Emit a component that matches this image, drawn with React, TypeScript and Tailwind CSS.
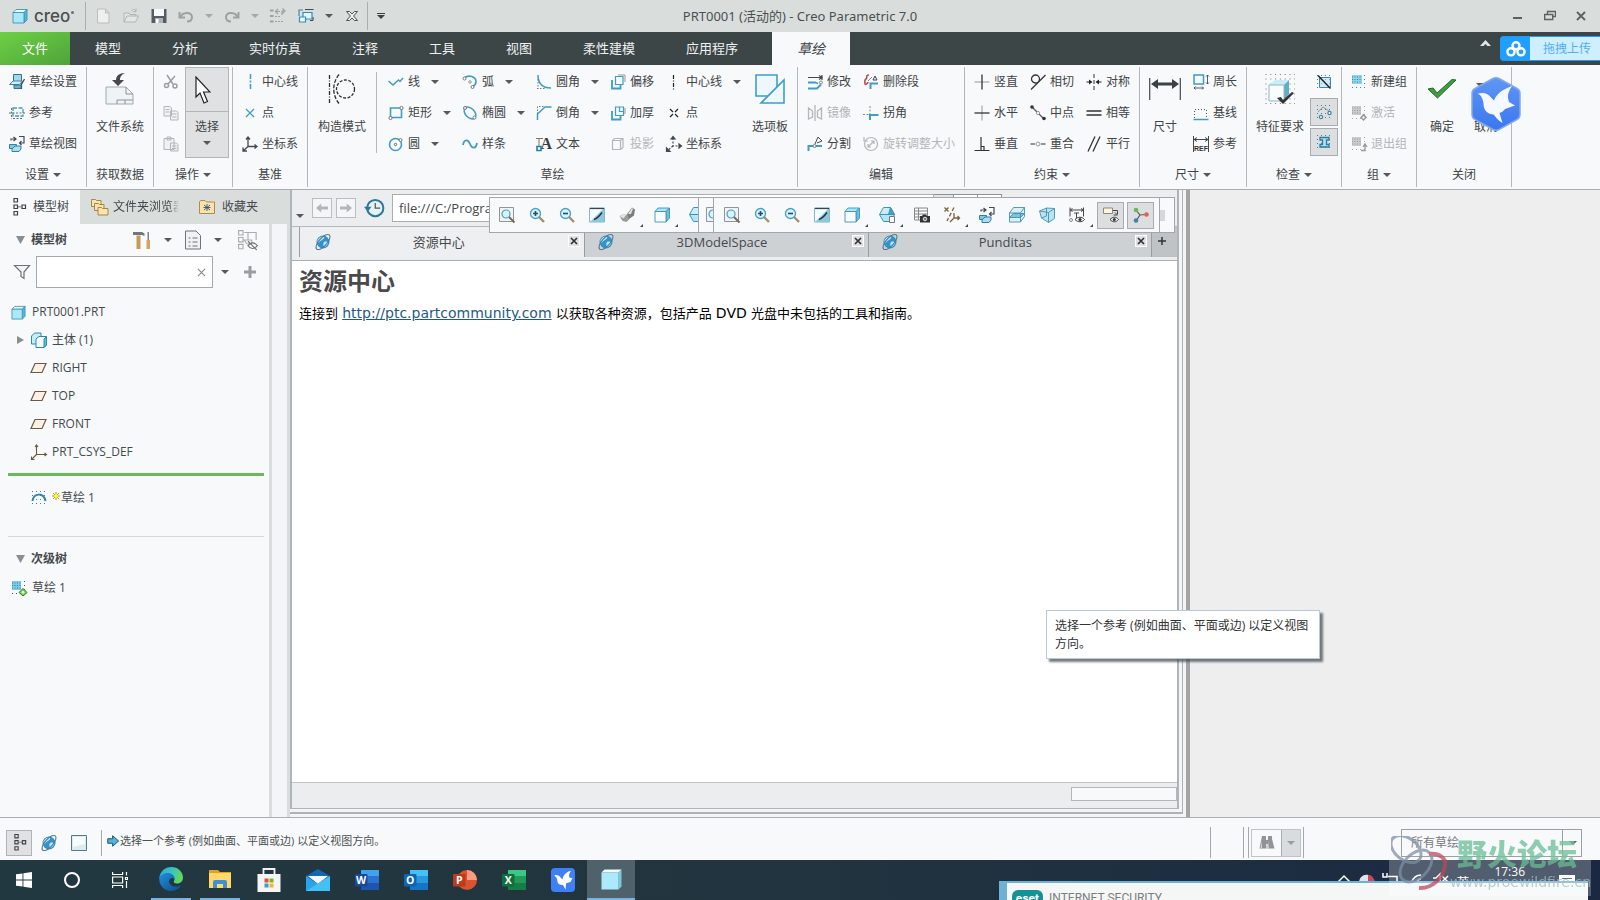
import React from "react";

const B = "#3f9cc6";
const D = "#44494c";
const G = "#b3b7b9";

function Globe() {
  return (
    <g>
      <circle cx="8" cy="8" r="6.500" fill="#2f93cc" />
      <path d="M3.500 5c2-2.500 4.500-3 5.500-2s-1 2-2 3-3 1-3 3c-2-1-2-3 -0.500-4zM9 8c2-1 4 0 4 1s-2 4-4 4c-1-2-1-4 0-5z" fill="#bfe6f7" />
      <ellipse cx="8" cy="8" rx="9.500" ry="4" transform="rotate(-48 8 8)" fill="none" stroke="#54778d" strokeWidth="1.100" />
    </g>
  );
}

function Cube() {
  return (
    <g stroke="#3d93b8" strokeWidth="0.900">
      <path d="M1 4.500L4 1.500h11L12 4.500z" fill="#e9fbff" />
      <path d="M12 4.500l3-3V12L12 15z" fill="#5cb6d6" />
      <path d="M1 4.500h11V15H1z" fill="#a9e9fa" />
    </g>
  );
}

function Dots({ color = "#4a7f9c" }: { color?: string }) {
  return <path d="M1 1.500h15M1 5.500h15M1 9.500h15M1 13.500h15" stroke={color} strokeDasharray="1 3" strokeWidth="1" fill="none" />;
}

function Magnifier({ children }: { children?: React.ReactNode }) {
  return (
    <g fill="none">
      <path d="M10 10l5 5" stroke="#b08b65" strokeWidth="2.400" />
      <circle cx="6.500" cy="6.500" r="5" fill="#d9f2fb" stroke="#4ba0c8" strokeWidth="1.300" />
      {children}
    </g>
  );
}

const art: Record<string, React.ReactNode> = {
  cube: <Cube />,
  globe: <Globe />,
  newFile: <path d="M2.500 1h8l3.500 3.500V15h-11.500zM10.500 1v4h3.500" fill="#eef0f0" stroke="#b9bdbe" />,
  open: <path d="M1 14V5h5l1 1.500h6V8M1 14l3-6h11.500l-3 6zM8 3c2-2 4-2 5 0M13 0.500v3h-3" fill="#e3e6e6" stroke="#b0b4b5" />,
  save: (
    <g>
      <path d="M0.500 1h15v14h-15z" fill="#555c63" />
      <path d="M3 1h10v7H3z" fill="#f6f8fa" />
      <path d="M4 10h8v5H4z" fill="#a9b2b9" />
      <path d="M5 11h2.500v4H5z" fill="#fff" />
    </g>
  ),
  undo: <path d="M1.500 4v5.500H7M2.500 9C4 4.500 14 3 14 9c0 3-2 4.500-5 4.500" fill="none" stroke="#9da2a4" strokeWidth="2" />,
  redo: <path d="M14.500 4v5.500H9M13.500 9C12 4.500 2 3 2 9c0 3 2 4.500 5 4.500" fill="none" stroke="#9da2a4" strokeWidth="2" />,
  regen: (
    <g fill="none" stroke="#9da2a4" strokeWidth="1.200">
      <path d="M0.500 2h2.500v1H0.500zM0.500 7.500h2.500v1H0.500zM0.500 13h2.500v1H0.500z" />
      <path d="M5 8.500h5M5 13.500h9" strokeDasharray="2 1" />
      <path d="M8 1L5.500 3.500 8 6M5.500 3.500H10M12.500 0.500L15 3l-2.500 2.500M15 3h-3v4" />
    </g>
  ),
  windows: (
    <g strokeWidth="1.200">
      <path d="M1 8V2h4M1 2h3" stroke="#3c8bb0" fill="none" />
      <path d="M7 1.500h8.500M12 12.500h3M15 9v3.500" stroke={D} fill="none" />
      <path d="M5 4.500h9v6.500H5z" fill="#e6f3f8" stroke="#2e8fb9" />
      <path d="M1.500 9h6v5h-6z" fill="#eefaff" stroke="#2e8fb9" />
    </g>
  ),
  closeX: <path d="M2.500 3.500h3L8 6l2.500-2.500h3L9.600 8l3.900 4.500h-3L8 10l-2.500 2.500h-3L6.400 8z" fill="#eef0f0" stroke="#4a4f50" />,
  sketchSetup: (
    <g fill="none">
      <path d="M4.500 0.500h8v9h-8z" fill="#9fd9ee" stroke="#39708d" />
      <path d="M0.500 10.500l3.500-3.500h9.500l-3 3.500z" stroke="#3f83a5" fill="#d4effa" />
      <path d="M5 14.500h7.500v-4l3-5.500" stroke={D} strokeWidth="1.200" />
      <path d="M5 11h7v3.500H5z" fill="#5fb4d3" stroke="#39708d" />
    </g>
  ),
  reference: (
    <g fill="none">
      <path d="M4 3h10v8H4z" stroke="#3f9cc6" strokeDasharray="4 1.500" strokeWidth="1.300" />
      <path d="M0 8h16M4 13.500h10M2.500 3v11" stroke={D} strokeDasharray="2 1.500" strokeWidth="0.800" />
    </g>
  ),
  sketchView: (
    <g fill="none">
      <path d="M2 4.500V3h4M4.500 1L7 3 4.500 5M10 0.500h5v6.500h-4M12.500 5l-2 2 2 2" stroke={D} strokeWidth="1.200" />
      <path d="M0.500 8.500h7v4h-7z" fill="#7fc9e2" stroke="#357f9f" />
      <path d="M3 13l3-3h6v3l-2 2.500H3z" fill="#a8def0" stroke="#357f9f" />
    </g>
  ),
  cut: (
    <g fill="none" stroke="#9a9ea0" strokeWidth="1.500">
      <path d="M4 1l6 9M12 2L5 10" />
      <circle cx="3.500" cy="11.500" r="2" />
      <circle cx="12" cy="12" r="2" />
    </g>
  ),
  copy: <path d="M1 1.500h6l1.500 1.500v8H1zM2.500 4.500h4M2.500 7h4M7.500 6h6l1.500 1.500V15H7.500zM9 9h4.500M9 12h4.500" fill="#f2f3f4" stroke={G} />,
  paste: <path d="M1 2.500h10v11H1zM4 1h4v3H4zM7.500 7h6l1.500 1.500V15H7.500zM9 10h4.500M9 12.500h4.500" fill="#eff0f1" stroke={G} />,
  centerBlue: <path d="M8.500 0v16" stroke={B} strokeWidth="1.500" strokeDasharray="5 1.500 2 1.500" />,
  pointBlue: <path d="M4 4l8 8M12 4l-8 8" stroke={B} strokeWidth="1.200" />,
  csys: <path d="M6 1v9.500h9M6 10.500L1 15M4 3.500L6 1l2 2.500M12.500 8.500l2.500 2-2.500 2M1 11.500V15h4" fill="none" stroke={D} strokeWidth="1.300" />,
  line: <path d="M0.500 7l4.500 4 5.500-5L12 7.500 15 4" fill="none" stroke={B} strokeWidth="1.500" />,
  rect: (
    <g fill="#fff">
      <path d="M2.500 3h11v9.500h-11z" fill="none" stroke={B} strokeWidth="1.600" />
      <circle cx="2.500" cy="13" r="1.600" stroke="#777" />
      <circle cx="13.500" cy="3" r="1.600" stroke="#777" />
    </g>
  ),
  circle: (
    <g fill="none">
      <circle cx="7.500" cy="8.500" r="6" stroke={B} strokeWidth="1.600" />
      <circle cx="7.500" cy="8.500" r="1.200" stroke="#666" />
      <circle cx="12.500" cy="4" r="1.500" stroke="#777" fill="#fff" />
    </g>
  ),
  arc: (
    <g fill="#fff">
      <path d="M2 4c5-4 12-1 12 3.500 0 2-1.500 4-3 5" fill="none" stroke={B} strokeWidth="1.600" />
      <circle cx="2.500" cy="4.500" r="1.500" stroke="#777" />
      <circle cx="8" cy="8" r="1.300" stroke="#999" />
      <circle cx="10.500" cy="13" r="1.500" stroke="#777" />
    </g>
  ),
  ellipse: (
    <g fill="#fff">
      <ellipse cx="8" cy="8" rx="7" ry="4.500" transform="rotate(45 8 8)" fill="none" stroke={B} strokeWidth="1.500" />
      <circle cx="3" cy="3" r="1.500" stroke="#777" />
      <circle cx="12.500" cy="12.500" r="1.500" stroke="#777" />
    </g>
  ),
  spline: <path d="M1 9c1-6 5-6 7-1s6 5 7-1" fill="none" stroke={B} strokeWidth="1.800" />,
  fillet: (
    <g fill="none">
      <path d="M2 1c0 8 4 13 13 13" stroke={B} strokeWidth="1.500" />
      <path d="M2 5v9.500M1 14.500h9" stroke="#777" strokeDasharray="1.500 1.500" />
    </g>
  ),
  chamfer: (
    <g fill="none">
      <path d="M1.500 15v-6L9 2h6.500" stroke={B} strokeWidth="1.500" />
      <path d="M1.500 9V1.500H9" stroke="#777" strokeDasharray="1.500 1.500" />
    </g>
  ),
  offset: (
    <g fill="none">
      <path d="M2 6v8.500h8.500V10" stroke={B} strokeWidth="1.800" />
      <path d="M5.500 2.500h7.500v8h-7.500z" stroke={B} strokeWidth="1.200" />
      <path d="M8 1h7v7" stroke="#999" />
    </g>
  ),
  thicken: (
    <g fill="none">
      <path d="M2 6v8.500h8.500V10" stroke={B} strokeWidth="1.800" />
      <path d="M5.500 2h8v8.500h-8zM9.500 2v4.500h4" stroke={B} strokeWidth="1.200" />
      <path d="M15 3v6" stroke="#999" />
    </g>
  ),
  project: <path d="M2.500 4.500h8v9h-8zM2.500 4.500l2-2h8.500v9l-2.500 2M10.500 4.500l2.500-2" fill="none" stroke={G} strokeWidth="1.200" />,
  centerBlack: <path d="M7.500 1v15" stroke="#222" strokeWidth="1.200" strokeDasharray="4 1.500 1 1.500" />,
  pointBlack: <path d="M4 4l3 3M12 4L9 7M4 12l3-3M12 12L9 9" stroke="#222" strokeWidth="1.200" />,
  csysDash: (
    <g fill="none" stroke={D} strokeWidth="1.200">
      <path d="M7 2v8h8M7 10l-6 5" strokeDasharray="2 1.500" />
      <path d="M5 3l2-2.500L9 3zM13 8l2.500 2-2.500 2zM0.500 12v3.500H4z" fill={D} />
    </g>
  ),
  modify: (
    <g fill="none">
      <path d="M1 3.500h14M12 1.500l3 2-3 2M15 1v5" stroke={D} strokeWidth="1.200" />
      <path d="M1 8.500h7l3 1M1 14.500h9l4-4" stroke={B} strokeWidth="1.800" />
      <circle cx="14" cy="8.500" r="1.500" stroke="#888" />
    </g>
  ),
  deleteSeg: (
    <g fill="none">
      <path d="M6 1c-4 0-1 3-3 4s-1 4-1 5 3 0 3-2" stroke="#b5494b" strokeWidth="1.500" />
      <path d="M7.500 15v-5.500h7.500" stroke={B} strokeWidth="2" />
      <path d="M10 6l2-4 2 4z" stroke={D} />
      <path d="M5 7l4-4" stroke="#888" />
    </g>
  ),
  mirror: <path d="M8 0v16M1.500 3l4 3v6l-4 2zM14.500 3l-4 3v6l4 2z" fill="none" stroke={G} strokeWidth="1.300" />,
  corner: (
    <g fill="none">
      <path d="M7 15v-5h8.500" stroke={B} strokeWidth="2" />
      <path d="M7 1v8M0 9.500h6" stroke="#888" strokeDasharray="2 1.500" />
    </g>
  ),
  divide: (
    <g fill="none">
      <path d="M1.500 15v-5H6M9 10h6" stroke={B} strokeWidth="2" />
      <circle cx="7.500" cy="10" r="1.500" stroke="#777" />
      <path d="M8 8l3-7 4 4-5 2" stroke={D} />
    </g>
  ),
  rotate: (
    <g fill="none" stroke={G} strokeWidth="1.200">
      <circle cx="8" cy="8" r="6.500" />
      <path d="M5 11l6-6M5 8v3h3M8 5h3v3M1 1v4h4" />
    </g>
  ),
  vertical: (
    <g>
      <path d="M0.500 8h15" stroke="#a9adaf" strokeWidth="1.300" />
      <path d="M8 0.500v15" stroke="#333" strokeWidth="1.300" />
    </g>
  ),
  horizontal: (
    <g>
      <path d="M8 0.500v15" stroke="#a9adaf" strokeWidth="1.300" />
      <path d="M0.500 8h15" stroke="#333" strokeWidth="1.300" />
    </g>
  ),
  perpendicular: <path d="M7 1v13M0.500 14.500h15M10 14.500v-4H7" fill="none" stroke="#333" strokeWidth="1.200" />,
  tangent: (
    <g fill="none" stroke="#333" strokeWidth="1.300">
      <circle cx="5.500" cy="5" r="4" />
      <path d="M1 15.500L15.500 1" />
    </g>
  ),
  midpoint: (
    <g>
      <path d="M2 2l12 12" stroke="#555" strokeWidth="1.200" />
      <circle cx="2" cy="2" r="1.800" fill="#333" />
      <circle cx="14" cy="13.500" r="1.800" fill="#333" />
      <circle cx="8" cy="8" r="1.600" fill="#fff" stroke="#999" />
    </g>
  ),
  coincident: (
    <g fill="none">
      <path d="M0.500 8h4.500M11 8h4.500" stroke="#333" strokeWidth="1.200" />
      <circle cx="8" cy="8" r="2" stroke="#999" />
    </g>
  ),
  symmetric: (
    <g>
      <path d="M8 0v16" stroke="#333" strokeDasharray="4 2" />
      <path d="M0.500 8H4M12 8h3.500" stroke="#222" strokeWidth="1.200" />
      <path d="M3 5.500l3.500 2.500-3.500 2.500zM13 5.500L9.500 8l3.500 2.500z" fill="#222" />
    </g>
  ),
  equal: <path d="M0.500 6h15M0.500 10h15" stroke="#333" strokeWidth="1.300" />,
  parallel: <path d="M2 15.500L9 0.500M7 15.500L14 0.500" stroke="#333" strokeWidth="1.300" />,
  perimeter: (
    <g fill="none">
      <path d="M1 1h9.500v9H1z" stroke={B} strokeWidth="1.500" />
      <path d="M14.500 1v9M13 2.500L14.500 1 16 2.500M13 8.500l1.500 1.500L16 8.500M1 14h9.500M2.500 12.500L1 14l1.500 1.500M9 12.500l1.500 1.500L9 15.500" stroke={D} strokeWidth="0.900" />
    </g>
  ),
  baseline: (
    <g fill="none">
      <path d="M1.500 13V4.500h12V13" stroke="#555" strokeDasharray="1 2" />
      <path d="M0.500 14.500h15" stroke={B} strokeWidth="1.500" />
    </g>
  ),
  refDim: (
    <g fill="none" stroke={D}>
      <path d="M0.500 0v16M15.500 0v16M1 3.500h14M4 1.500l-3 2 3 2M12 1.500l3 2-3 2" />
      <text x="8" y="14.500" fontSize="7" textAnchor="middle" stroke="none" fill="#333" fontFamily="Liberation Sans, sans-serif" fontWeight="700">REF</text>
    </g>
  ),
  overlap: (
    <g>
      <Dots />
      <path d="M3.500 3.500v10h10zM3.500 3.500h11v10" fill="#a9dcec" fillOpacity="0.500" stroke="#3a89a8" />
      <path d="M2 1.500l12.500 13" stroke="#223" strokeWidth="1.500" />
    </g>
  ),
  openEnds: (
    <g>
      <Dots />
      <path d="M2 8l5-5 6 4" fill="none" stroke="#8a9aa5" />
      <circle cx="5" cy="13" r="1.600" fill="#fff" stroke="#3a89a8" strokeWidth="1.300" />
      <circle cx="13.500" cy="9" r="1.600" fill="#fff" stroke="#3a89a8" strokeWidth="1.300" />
    </g>
  ),
  shadeLoops: (
    <g>
      <Dots />
      <path d="M4 3.500h9v2.500h-2.500v4.500H13V13H4v-2.500h2.500V6H4z" fill="#b3e0f0" stroke="#2c7d9e" strokeWidth="1.300" />
    </g>
  ),
  newGroup: (
    <g>
      <Dots />
      <path d="M1 1h10v9H1z" fill="#8fd4ea" />
      <path d="M1 3h10M1 5.500h10M1 8h10" stroke="#2f7fa0" strokeDasharray="1 1.500" />
    </g>
  ),
  activate: (
    <g>
      <Dots color="#aaa" />
      <path d="M1 1h9v9H1z" fill="#c9cccd" />
      <path d="M1 3h9M1 5.500h9M1 8h9" stroke="#999" strokeDasharray="1 1.500" />
      <path d="M12.500 8.500l3.500 4-3.500 3.500L9 12.500z" fill="#999" />
      <circle cx="12.500" cy="12.500" r="1.200" fill="#eee" />
    </g>
  ),
  exitGroup: (
    <g>
      <Dots color="#aaa" />
      <path d="M1 1h9v9H1z" fill="#c9cccd" />
      <path d="M1 3h9M1 5.500h9M1 8h9" stroke="#999" strokeDasharray="1 1.500" />
      <path d="M10 14.500h4V9M12 11l2-3 2 3" stroke="#999" fill="none" strokeWidth="1.300" />
    </g>
  ),
  tree: (
    <g fill="none" stroke="#3f4446" strokeWidth="1.200">
      <path d="M2 -0.500h3.500v3.500H2zM2 6h3.500v3.500H2zM2 12.500h3.500v3.500H2zM10 6h3.500v3.500H10z" />
      <path d="M6 7.800h3.500" stroke="#888" />
    </g>
  ),
  folders: (
    <g fill="#fbe3ae" stroke="#a07a3c" strokeWidth="0.900">
      <path d="M0.500 1.500V0.500h4l1 1h4.500v6H0.500z" />
      <path d="M3.500 4.500h4l1 1h4.500v6H3.500z" />
      <path d="M7 8.500h3.500l1 1H17V16H7z" />
    </g>
  ),
  favorite: (
    <g>
      <path d="M0.500 3V14.500h15V3H7.500L6 1.500H1.500z" fill="#fbe3ae" stroke="#b08b50" />
      <path d="M8 5v7M5 6l6 5M11 6l-6 5M4.500 8.500h7" stroke="#31566b" strokeWidth="0.900" />
    </g>
  ),
  tools: (
    <g>
      <path d="M-1 0h9l2.500 1.500V4L8 3H-1z" fill="#6f777c" />
      <path d="M2.500 3.500h4V17h-4z" fill="#c79a55" />
      <path d="M13.500 0h1.500v8h-1.500z" fill="#7b8387" />
      <path d="M12.500 8H16v9h-3.500z" fill="#d2a560" />
    </g>
  ),
  list: (
    <g fill="none">
      <path d="M0.500 -1h10.500L15.500 3.500V17H0.500z" fill="#f1f2f3" stroke="#6d7376" />
      <path d="M3.500 6h2M3.500 10h2M3.500 14h2M7.500 6h5M7.500 10h5M7.500 14h5" stroke="#6d7376" />
    </g>
  ),
  treeHidden: (
    <g fill="none" stroke="#a9adaf" strokeWidth="0.900">
      <path d="M0.500 0.500h3.500v3.500h-3.500zM0.500 6h3.500v3.500h-3.500zM0.500 11.500h3.500v3.500h-3.500zM5 2h10M8 2v6M14.500 2v6M5 8h6v3H7z" />
      <path d="M8 12.500c2-3 5-3 7.500 0-2.500 3-5.500 3-7.500 0zM8 9l7 7" stroke="#777" />
    </g>
  ),
  filter: <path d="M0.500 1.500h15L10 8v6.500l-3-2V8z" fill="#f2f3f4" stroke="#6d7376" strokeWidth="1.200" />,
  bodies: (
    <g stroke="#2f87ad">
      <path d="M0.500 4l3-3H10v9l-2 2H0.500z" fill="#c4effa" />
      <path d="M5 7l3-2.500h7.500V13L13 15.500H5z" fill="#f3fcff" />
      <path d="M13 15.500V7l2.500-2.500V13z" fill="#64bbd8" />
    </g>
  ),
  plane: <path d="M4 3.500h11l-4 9H0z" fill="#fdf1e2" stroke="#6b5a4a" strokeWidth="1.200" />,
  treeCsys: <path d="M5.500 1v9.500h10M5.500 10.500L0.500 15.500M4 3l1.500-2L7 3M13.500 9l2 1.500-2 1.500M0.500 12.500v3h3" fill="none" stroke="#6b5a3c" strokeWidth="1.100" />,
  sketch: (
    <g>
      <Dots />
      <path d="M1.500 11c1-8 11-9 13 0" fill="none" stroke="#3d84a8" strokeWidth="2" />
    </g>
  ),
  sketchGroup: (
    <g>
      <Dots color="#456" />
      <path d="M1 1h9v9H1z" fill="#7fcbe5" />
      <path d="M1 3h9M1 5.500h9M1 8h9" stroke="#2f7fa0" strokeDasharray="1 1.500" />
      <path d="M12 8.500l4 4-4 3.500-4-3.500z" fill="#7ed45e" stroke="#2d7d1d" />
      <circle cx="12" cy="12.300" r="1.200" fill="#e8ffe0" />
    </g>
  ),
  back: <path d="M0 8l7-6v4h9v4H7v4z" fill="#b3b6b8" />,
  forward: <path d="M16 8L9 2v4H0v4h9v4z" fill="#b3b6b8" />,
  history: (
    <g fill="none">
      <circle cx="9" cy="8" r="6.500" fill="#e4f3f9" stroke="#2f7797" strokeWidth="1.600" />
      <path d="M9 4v4h4" stroke="#555" />
      <path d="M0 7h6l-3 4z" fill="#2f7797" />
    </g>
  ),
  zoomFit: (
    <g>
      <path d="M0.500 0.500h14v14h-14z" fill="#f1f3f4" stroke="#8f9598" />
      <circle cx="7" cy="7" r="4" fill="#d9f2fb" stroke="#4ba0c8" strokeWidth="1.200" />
      <path d="M10 10l5.500 5.500" stroke="#7b6a5b" strokeWidth="2" />
    </g>
  ),
  zoomIn: <Magnifier><path d="M4 6.500h5M6.500 4v5" stroke="#1d4f69" strokeWidth="1.600" /></Magnifier>,
  zoomOut: <Magnifier><path d="M4 6.500h5" stroke="#1d4f69" strokeWidth="1.600" /></Magnifier>,
  repaint: (
    <g>
      <path d="M0.500 1h15v14h-15z" fill="#f4fbfd" stroke="#8fb4c2" />
      <path d="M1 15L15 1v14z" fill="#8cc8db" />
      <path d="M1 1.500h14" stroke="#345" strokeWidth="1.200" />
      <path d="M5 12.500c3-1 5-3 8-7" stroke="#234" strokeWidth="1.500" fill="none" />
    </g>
  ),
  shading: (
    <g>
      <path d="M0.500 9l4-2 5 1 1 4-3 3-4-1z" fill="#9b9b99" />
      <path d="M8 7l5-6.500 3 2-1 6-5 3.500z" fill="#7d7d7b" />
      <path d="M0.500 9l4-2 3 0.500-3 4zM9 7l4-6 1 1-2 5z" fill="#e2e2e1" />
    </g>
  ),
  boxLight: (
    <g stroke="#3d93b8" strokeWidth="0.900">
      <path d="M1 4.500L4 1h11.500L12 4.500z" fill="#aee6f6" />
      <path d="M12 4.500L15.500 1v10L12 15z" fill="#6cc0dc" />
      <path d="M1 4.500h11V15H1z" fill="#f7fbfc" />
    </g>
  ),
  hexView: (
    <g stroke="#3d93b8" strokeWidth="1">
      <path d="M4.500 0.500h7l4 7H0.500z" fill="#c9eefa" />
      <path d="M0.500 7.500H15.500L12 14.500H4.500z" fill="#b3e5f4" />
      <path d="M11.500 0.500l4 7h-6z" fill="#4d9fbf" />
      <path d="M10.500 9.500h5v6h-5z" fill="#fff" stroke="#777" />
    </g>
  ),
  camera: (
    <g fill="none">
      <path d="M0.500 1h13v12h-13zM0.500 4h13M0.500 7h13M0.500 10h6M4.500 1v12" stroke="#888" />
      <path d="M6 9h2l1-1.500h3L13 9h3v6.500H6z" fill="#333" />
      <circle cx="11" cy="12" r="1.800" fill="#777" stroke="#ddd" />
    </g>
  ),
  datum: (
    <g fill="none" stroke="#7d6237" strokeWidth="1.300">
      <path d="M0.500 0.500l4 4M4.500 0.500l-4 4" />
      <path d="M10 0.500L3 14" strokeDasharray="4 2" />
      <path d="M10 6v5h5.500M10 11l-4 4M13.500 9l2 2-2 2" />
    </g>
  ),
  boxPlane: (
    <g stroke="#4590b0" strokeWidth="0.900">
      <path d="M0.500 6l4-5.500h11v9L11.500 15H0.500z" fill="#dbeff6" />
      <path d="M0.500 10.500l4-4h11l-4 4z" fill="#7dc3dc" />
      <path d="M0.500 6h11v9M11.500 6l4-5.500" fill="none" />
    </g>
  ),
  perspective: (
    <g stroke="#4590b0" strokeWidth="0.900">
      <path d="M0.500 4l7-3 8 0.500v10l-6 4L2.500 11z" fill="#b9e3f1" />
      <path d="M0.500 4l9 1.500v10M9.500 5.500l6-4M2.500 11l5-2V1" fill="none" />
    </g>
  ),
  annotation: (
    <g fill="none">
      <path d="M1 0.500v9M14.500 0.500v9M1 3h13.500M3.500 1.500L1 3l2.500 1.500M12 1.500L14.500 3 12 4.500M5 6h5M7.500 6v5" stroke={D} />
      <circle cx="2" cy="13" r="1.500" stroke="#888" />
      <path d="M6 12.500c3-3 7-3 9.500 0-2.500 3-6.500 3-9.500 0z" fill="#fff" stroke="#333" />
      <circle cx="11" cy="12.500" r="1.600" fill="#333" />
    </g>
  ),
  noteEye: (
    <g fill="none">
      <path d="M0.500 1h9v5.500h-9z" fill="#fff4dc" stroke="#888" />
      <path d="M10 3.500h4.500V7M12 5.500l2.500 2.500M10.500 8h4" stroke={D} />
      <path d="M7 12.500c3-3 6-3 8.500 0-2.500 3-5.500 3-8.500 0z" fill="#fff" stroke="#333" />
      <circle cx="11.300" cy="12.500" r="1.500" fill="#333" />
    </g>
  ),
  nodes: (
    <g>
      <path d="M3 3l4 5 6-0.500M7 8l-4 6" stroke="#555" fill="none" strokeWidth="1.200" />
      <circle cx="3" cy="3" r="2.300" fill="#69b85a" />
      <circle cx="13.500" cy="7.500" r="2.300" fill="#dd6257" />
      <circle cx="3" cy="13.500" r="2.300" fill="#3f84a8" />
    </g>
  ),
  panel: (
    <g>
      <path d="M0.500 0.500h15v15h-15z" fill="#dcebf0" stroke="#56798a" />
      <path d="M2 2h12v7L2 12z" fill="#f7fbfc" />
    </g>
  ),
  arrow: <path d="M1 5h6.500V1l8 7-8 7v-4H1z" fill="#55b4dc" stroke="#1f4d66" strokeWidth="1.300" />,
  binoculars: (
    <g fill="#909496">
      <path d="M3 1h4v3l0.500 9.500H0.500L2 6zM9 1h4v3l2.500 9.500h-7z" />
      <path d="M6.500 5h3v4h-3z" />
      <path d="M3 6v7H1.500zM10 6v7H9z" fill="#d5d7d8" />
    </g>
  ),
  bird: <path d="M1 4.500c2-1 4 0 5 1.500l1.500 1.500C8 4 11 1 14.500 0.500 13 2.500 12.500 4 13 6l2.500 0.500-1.500 3-3.500 1 -0.500 5-2-3.500C5 12 3.500 10.500 3.500 8.500 3.500 6.500 2.500 5.500 1 4.500z" fill="#fff" />,
};

function Icon({ name, className = "size-4" }: { name: string; className?: string }) {
  return (
    <svg viewBox="0 0 16 16" aria-hidden="true" className={`${className} shrink-0 overflow-visible`}>
      {art[name]}
    </svg>
  );
}

function Caret({ className = "text-[#55595b]" }: { className?: string }) {
  return (
    <svg viewBox="0 0 8 4" aria-hidden="true" className={`${className} h-1 w-2 shrink-0`}>
      <path d="M0 0h8L4 4z" fill="currentColor" />
    </svg>
  );
}

function TextIcon() {
  return (
    <span className="relative flex size-4 shrink-0 items-center justify-end font-['Liberation_Serif',serif] text-[16px] leading-4 font-bold text-[#3a3f42]">
      <svg viewBox="0 0 16 16" aria-hidden="true" className="absolute inset-0 size-4" fill="none">
        <path d="M0 2.500h7M3 2.500V10" stroke="#777" />
        <path d="M1 10.500h4v4H1z" fill="#fff" stroke="#1f7fb0" strokeWidth="1.600" />
      </svg>
      A
    </span>
  );
}

type ItemProps = { icon: string; label: string; caret?: boolean; disabled?: boolean };

function Item({ icon, label, caret, disabled }: ItemProps) {
  return (
    <div className="flex h-[30px] items-center">
      <button type="button" disabled={disabled} className={disabled ? "flex items-center gap-1 whitespace-nowrap text-[#b3b6b8]" : "flex items-center gap-1 whitespace-nowrap"}>
        {icon === "text" ? <TextIcon /> : <Icon name={icon} />}
        {label}
      </button>
      {caret && (
        <button type="button" aria-label={`${label}选项`} className="ml-[11px] flex h-5 items-center">
          <Caret />
        </button>
      )}
    </div>
  );
}

function Column({ items, className = "" }: { items: ItemProps[]; className?: string }) {
  return (
    <div className={`flex shrink-0 flex-col gap-px ${className}`}>
      {items.map((i) => (
        <Item key={i.label} {...i} />
      ))}
    </div>
  );
}

function Group({ label, caret, className, children }: { label: string; caret?: boolean; className: string; children: React.ReactNode }) {
  return (
    <section aria-label={label} className={`flex shrink-0 flex-col pt-[2px] ${className}`}>
      <div className="flex flex-1">{children}</div>
      <div className="flex h-7 items-center justify-center gap-1">
        {label}
        {caret && <Caret />}
      </div>
    </section>
  );
}

function Big({ label, className = "", children }: { label: string; className?: string; children: React.ReactNode }) {
  return (
    <button type="button" className={`flex h-[70px] flex-col items-center justify-between whitespace-nowrap ${className}`}>
      <span className="flex h-11 items-center">{children}</span>
      <span className="h-[18px] leading-4">{label}</span>
    </button>
  );
}

function Separator() {
  return <div className="my-[2px] w-px shrink-0 bg-[#b4b8ba]" />;
}

function TitleBar() {
  const btn = "flex h-6 items-center";
  return (
    <header className="grid h-8 grid-cols-[1fr_auto_1fr] items-center bg-[#d9dedd] text-[#4a5052]">
      <div className="flex h-8 items-center">
        <Icon name="cube" className="ml-[12px] size-4" />
        <span className="ml-[6px] font-[Inter,sans-serif] text-[17px] leading-5 font-medium">creo</span>
        <span className="mb-2 ml-px size-[3px] rounded-full bg-[#6a7072]" />
        <span className="ml-[11px] h-7 w-px bg-[#a9aeae]" />
        <div className="flex items-center pl-[9px]">
          <button type="button" aria-label="新建" className={btn}><Icon name="newFile" /></button>
          <button type="button" aria-label="打开" className={`${btn} ml-[12px]`}><Icon name="open" /></button>
          <button type="button" aria-label="保存" className={`${btn} ml-[12px]`}><Icon name="save" /></button>
          <button type="button" aria-label="撤消" className={`${btn} ml-[11px]`}><Icon name="undo" /></button>
          <button type="button" aria-label="撤消列表" className={`${btn} ml-[11px]`}><Caret className="text-[#a4a8aa]" /></button>
          <button type="button" aria-label="重做" className={`${btn} ml-[11px]`}><Icon name="redo" /></button>
          <button type="button" aria-label="重做列表" className={`${btn} ml-[11px]`}><Caret className="text-[#a4a8aa]" /></button>
          <button type="button" aria-label="重新生成" className={`${btn} ml-[11px]`}><Icon name="regen" /></button>
          <button type="button" aria-label="窗口" className={`${btn} ml-[12px]`}><Icon name="windows" /></button>
          <button type="button" aria-label="窗口列表" className={`${btn} ml-[11px]`}><Caret /></button>
          <button type="button" aria-label="关闭窗口" className={`${btn} ml-[11px]`}><Icon name="closeX" /></button>
          <span className="ml-[7px] h-7 w-px bg-[#a9aeae]" />
          <button type="button" aria-label="自定义快速访问工具栏" className="ml-[9px] flex flex-col gap-px">
            <span className="h-px w-2 bg-[#3c4244]" />
            <Caret className="text-[#3c4244]" />
          </button>
        </div>
      </div>
      <h1 className="font-['Noto_Sans','Noto_Sans_CJK_SC',sans-serif] text-[13px] leading-5">PRT0001 (活动的) - Creo Parametric 7.0</h1>
      <div className="flex items-center justify-end gap-[20px] pr-[14px]">
        <button type="button" aria-label="最小化" className="flex h-5 w-[11px] items-center pt-1"><span className="h-[2px] w-[9px] bg-[#5b6163]" /></button>
        <button type="button" aria-label="还原">
          <svg viewBox="0 0 12 12" className="size-3" fill="none" stroke="#5b6163" strokeWidth="1.400"><path d="M3.500 4V1.500h8v5H9M0.700 4.500h8v5h-8z" /></svg>
        </button>
        <button type="button" aria-label="关闭">
          <svg viewBox="0 0 10 10" className="size-[10px]" fill="none" stroke="#5b6163" strokeWidth="1.800"><path d="M1 1l8 8M9 1L1 9" /></svg>
        </button>
      </div>
    </header>
  );
}

function TabBar() {
  const tabs = ["模型", "分析", "实时仿真", "注释", "工具", "视图", "柔性建模", "应用程序"];
  return (
    <nav className="flex h-[33px] items-stretch bg-[#3d4647] text-[13px] text-[#eef1f1]">
      <button type="button" className="w-[70px] bg-linear-to-br from-[#6ed045] to-[#4ea43a] text-white">文件</button>
      <div className="flex gap-px">
        {tabs.map((t) => (
          <button key={t} type="button" className="px-[25px]">{t}</button>
        ))}
      </div>
      <button type="button" className="ml-[9px] w-[78px] bg-[#f7f9fb] text-[14px] text-[#3f4446] italic">草绘</button>
      <div className="flex flex-1 items-center justify-end">
        <button type="button" aria-label="最小化功能区" className="mr-[9px] mb-3 h-2">
          <svg viewBox="0 0 11 6" className="h-[6px] w-[11px]"><path d="M0 6l5.500-6L11 6H7.500l-2-2-2 2z" fill="#e3e6e6" /></svg>
        </button>
        <button type="button" className="flex h-[25px] w-[100px] items-stretch rounded-l border-y border-l border-[#1f9cf5] bg-[#cfeefe] text-[12px] text-[#4fb0ee]">
          <span className="flex w-[29px] items-center justify-center bg-[#1f9fff]">
            <svg viewBox="0 0 20 16" className="h-4 w-5" fill="none" stroke="#fff" strokeWidth="2.400">
              <circle cx="10" cy="4.800" r="3.500" /><circle cx="5" cy="10.800" r="3.600" /><circle cx="15" cy="10.800" r="3.600" />
            </svg>
          </span>
          <span className="flex flex-1 items-center justify-center pl-1">拖拽上传</span>
        </button>
      </div>
    </nav>
  );
}

function Ribbon() {
  return (
    <div className="relative flex h-[125px] border-b border-[#a9adaf] bg-[#f7f9fb] text-[12px] leading-4 text-[#3f4446]">
      <Group label="设置" caret className="w-[86px]">
        <Column className="pl-[9px]" items={[{ icon: "sketchSetup", label: "草绘设置" }, { icon: "reference", label: "参考" }, { icon: "sketchView", label: "草绘视图" }]} />
      </Group>
      <Separator />
      <Group label="获取数据" className="w-[66px]">
        <Big label="文件系统" className="w-full">
          <svg viewBox="0 0 30 34" className="h-[34px] w-[30px]">
            <path d="M1 15h20l7 7v10H1z" fill="#eef3f5" stroke="#a3a9ac" /><path d="M21 15v7h7M12 32v-4h16M20 28v4" fill="none" stroke="#8d9396" />
            <path d="M20 1C14 1 11 4 11 8H7l6 6 6-6h-4c0-3 1-5 5-7z" fill="#44494c" />
          </svg>
        </Big>
      </Group>
      <Separator />
      <Group label="操作" caret className="w-[78px]">
        <div className="flex w-[31px] flex-col gap-px pl-[9px]">
          <button type="button" aria-label="剪切" className="h-[30px]"><Icon name="cut" /></button>
          <button type="button" aria-label="复制" className="h-[30px]"><Icon name="copy" /></button>
          <button type="button" aria-label="粘贴" className="h-[30px]"><Icon name="paste" /></button>
        </div>
        <div className="flex h-[91px] w-11 flex-col border border-[#b3b6b8] bg-[#dfe1e3]">
          <button type="button" aria-label="选择工具" className="flex h-11 items-center justify-center border-b border-[#b3b6b8] pr-2">
            <svg viewBox="0 0 16 28" className="h-7 w-4"><path d="M1 1v20l4-4 4 10 3.500-1.500L8.500 16H15z" fill="#fff" stroke="#222" strokeWidth="1.200" /></svg>
          </button>
          <button type="button" className="flex flex-1 flex-col items-center gap-[6px] pt-[7px]">选择<Caret /></button>
        </div>
      </Group>
      <Separator />
      <Group label="基准" className="w-[74px]">
        <Column className="pl-[9px]" items={[{ icon: "centerBlue", label: "中心线" }, { icon: "pointBlue", label: "点" }, { icon: "csys", label: "坐标系" }]} />
      </Group>
      <Separator />
      <Group label="草绘" className="w-[489px]">
        <Big label="构造模式" className="w-[68px]">
          <svg viewBox="0 0 28 30" className="h-[30px] w-7" fill="none" stroke="#2c3032" strokeWidth="1.300">
            <path d="M1.500 1v28" strokeDasharray="4 1.500 1 1.500" /><path d="M11 0.500C4 9 4 21 11 29.500" strokeDasharray="4 1.500" /><circle cx="17.500" cy="15" r="9" strokeDasharray="3 1.500" />
          </svg>
        </Big>
        <div className="mt-[5px] h-[81px] w-px bg-[#b4b8ba]" />
        <Column className="ml-[11px] w-[74px]" items={[{ icon: "line", label: "线", caret: true }, { icon: "rect", label: "矩形", caret: true }, { icon: "circle", label: "圆", caret: true }]} />
        <Column className="w-[74px]" items={[{ icon: "arc", label: "弧", caret: true }, { icon: "ellipse", label: "椭圆", caret: true }, { icon: "spline", label: "样条" }]} />
        <Column className="w-[74px]" items={[{ icon: "fillet", label: "圆角", caret: true }, { icon: "chamfer", label: "倒角", caret: true }, { icon: "text", label: "文本" }]} />
        <Column className="w-[56px]" items={[{ icon: "offset", label: "偏移" }, { icon: "thicken", label: "加厚" }, { icon: "project", label: "投影", disabled: true }]} />
        <Column className="w-[78px]" items={[{ icon: "centerBlack", label: "中心线", caret: true }, { icon: "pointBlack", label: "点" }, { icon: "csysDash", label: "坐标系" }]} />
        <Big label="选项板" className="w-[52px]">
          <svg viewBox="0 0 30 30" className="size-[30px]" fill="#eef7fb" stroke="#3aa0c9" strokeWidth="1.600">
            <path d="M1 1h21v21H1z" /><path d="M29 6v23H6z" />
          </svg>
        </Big>
      </Group>
      <Separator />
      <Group label="编辑" className="w-[166px]">
        <Column className="w-[65px] pl-[9px]" items={[{ icon: "modify", label: "修改" }, { icon: "mirror", label: "镜像", disabled: true }, { icon: "divide", label: "分割" }]} />
        <Column items={[{ icon: "deleteSeg", label: "删除段" }, { icon: "corner", label: "拐角" }, { icon: "rotate", label: "旋转调整大小", disabled: true }]} />
      </Group>
      <Separator />
      <Group label="约束" caret className="w-[174px]">
        <Column className="w-[65px] pl-[9px]" items={[{ icon: "vertical", label: "竖直" }, { icon: "horizontal", label: "水平" }, { icon: "perpendicular", label: "垂直" }]} />
        <Column className="w-[56px]" items={[{ icon: "tangent", label: "相切" }, { icon: "midpoint", label: "中点" }, { icon: "coincident", label: "重合" }]} />
        <Column items={[{ icon: "symmetric", label: "对称" }, { icon: "equal", label: "相等" }, { icon: "parallel", label: "平行" }]} />
      </Group>
      <Separator />
      <Group label="尺寸" caret className="w-[106px]">
        <Big label="尺寸" className="w-[50px]">
          <svg viewBox="0 0 32 22" className="h-[22px] w-8"><path d="M0.700 0v22M31.300 0v22" stroke="#44494c" strokeWidth="1.200" /><path d="M2 6l7-5v3.500h14V1l7 5-7 5V7.500H9V11z" fill="#3c4143" /></svg>
        </Big>
        <Column className="ml-[3px]" items={[{ icon: "perimeter", label: "周长" }, { icon: "baseline", label: "基线" }, { icon: "refDim", label: "参考" }]} />
      </Group>
      <Separator />
      <Group label="检查" caret className="w-[94px]">
        <Big label="特征要求" className="w-[63px] pl-[3px]">
          <svg viewBox="0 0 30 30" className="size-[30px]">
            <path d="M0.500 0.500h30M0.500 5h30M0.500 10h30M0.500 15h30M0.500 20h30M0.500 25h30M0.500 29.500h30" stroke="#777" strokeDasharray="1 3.800" />
            <path d="M4 11l6-5h14l-5 5z" fill="#c9edf6" /><path d="M19 11l5-5v14l-5 7z" fill="#62acc4" /><path d="M4 11h15v16H4z" fill="#f9fcfd" stroke="#8ab8c8" />
            <path d="M12 24l4-1 2 3 9-8 2 1-11 11z" fill="#333" />
          </svg>
        </Big>
        <div className="flex flex-col gap-[2px] pt-px">
          <button type="button" aria-label="重叠几何" className="flex size-7 items-center justify-center"><Icon name="overlap" /></button>
          <button type="button" aria-label="突出显示开放端" aria-pressed="true" className="flex size-7 items-center justify-center border border-[#a9acae] bg-[#dcdee0]"><Icon name="openEnds" /></button>
          <button type="button" aria-label="着色封闭环" aria-pressed="true" className="flex size-7 items-center justify-center border border-[#a9acae] bg-[#dcdee0]"><Icon name="shadeLoops" /></button>
        </div>
      </Group>
      <Separator />
      <Group label="组" caret className="w-[74px]">
        <Column className="pl-[9px]" items={[{ icon: "newGroup", label: "新建组" }, { icon: "activate", label: "激活", disabled: true }, { icon: "exitGroup", label: "退出组", disabled: true }]} />
      </Group>
      <Separator />
      <Group label="关闭" className="relative w-[94px]">
        <Big label="确定" className="ml-[3px] w-11">
          <svg viewBox="0 0 30 20" className="h-5 w-[30px]"><path d="M1 10l5-1 4 5L25 0.500l4 0.500L10.500 19z" fill="#3f9e3f" stroke="#1f6b2a" /></svg>
        </Big>
        <Big label="取消" className="w-11"><span className="mr-3 mb-2"><Caret /></span></Big>
        <svg viewBox="0 0 50 56" aria-hidden="true" className="absolute top-[11px] left-[54px] h-14 w-[50px]">
          <defs>
            <linearGradient id="hex" x1="0" y1="0" x2="0" y2="1"><stop offset="0" stopColor="#5e97f5" /><stop offset="1" stopColor="#3b76f0" /></linearGradient>
          </defs>
          <path d="M22 2.500q3-1.500 6 0l18 10q3 1.500 3 5v21q0 3.500-3 5l-18 10q-3 1.500-6 0l-18-10q-3-1.500-3-5v-21q0-3.500 3-5z" fill="url(#hex)" stroke="#84a9e8" strokeWidth="1.500" />
          <path d="M7 17.500c6-1.500 10 0 14 5l2 2c2-6 8-11 18-14.500-4 6-5 10-3 16l6 3.500-10 3.500c-2 3-4 3.500-5.500 4l3 10c-5-3-7-6.500-9-8.500-9-1-10-7-10-11.500-1-5-2-7-5.500-9.500z" fill="#f5f8ff" />
        </svg>
      </Group>
      <Separator />
    </div>
  );
}

function Triangle({ open }: { open: boolean }) {
  return (
    <svg viewBox="0 0 10 8" aria-hidden="true" className="h-2 w-[10px] shrink-0">
      <path d={open ? "M0 0h9L4.500 8z" : "M1 0l7 4-7 4z"} fill="#8a8e90" />
    </svg>
  );
}

function Aside() {
  const nodes = [
    { icon: "plane", text: "RIGHT" },
    { icon: "plane", text: "TOP" },
    { icon: "plane", text: "FRONT" },
    { icon: "treeCsys", text: "PRT_CSYS_DEF" },
  ];
  return (
    <aside className="flex w-[287px] shrink-0 flex-col bg-[#f7f9fb] text-[12px] leading-4 text-[#45494c]">
      <div className="flex h-[34px] items-stretch bg-[#d9dedd]">
        <button type="button" className="flex w-20 items-center gap-[5px] bg-[#f7f9fb] pl-[12px]"><Icon name="tree" />模型树</button>
        <button type="button" className="flex w-[99px] items-center gap-[6px] overflow-hidden pl-[11px] whitespace-nowrap">
          <Icon name="folders" />
          <span className="overflow-hidden mask-r-from-85%">文件夹浏览器</span>
        </button>
        <button type="button" className="flex items-center gap-[7px] pl-[20px]"><Icon name="favorite" />收藏夹</button>
      </div>
      <div className="flex flex-1">
        <div className="flex flex-1 flex-col border-r-[3px] border-[#d9dddd]">
          <div className="flex h-8 items-center">
            <button type="button" className="ml-[16px] flex items-center gap-[5px] font-bold"><Triangle open />模型树</button>
            <button type="button" aria-label="设置" className="ml-[67px]"><Icon name="tools" className="h-5 w-4" /></button>
            <button type="button" aria-label="设置选项" className="ml-[14px]"><Caret /></button>
            <button type="button" aria-label="显示" className="ml-[13px]"><Icon name="list" className="h-5 w-4" /></button>
            <button type="button" aria-label="显示选项" className="ml-[13px]"><Caret /></button>
            <button type="button" aria-label="隐藏树" className="ml-[16px]"><Icon name="treeHidden" className="size-5" /></button>
          </div>
          <div className="flex h-8 items-center">
            <Icon name="filter" className="ml-[14px] size-4" />
            <div className="ml-[6px] flex h-8 w-[177px] items-center border border-[#a3a9ac] bg-white pr-[6px]">
              <input aria-label="搜索模型树" className="h-7 min-w-0 flex-1 px-2 outline-none" />
              <button type="button" aria-label="清除">
                <svg viewBox="0 0 10 10" className="size-[9px]" stroke="#8a8e90" strokeWidth="1.300"><path d="M1 1l8 8M9 1L1 9" /></svg>
              </button>
            </div>
            <button type="button" aria-label="搜索选项" className="ml-2"><Caret /></button>
            <button type="button" aria-label="添加" className="ml-[15px]">
              <svg viewBox="0 0 12 12" className="size-3" stroke="#9a9ea0" strokeWidth="3"><path d="M6 0v12M0 6h12" /></svg>
            </button>
          </div>
          <div className="pt-[10px] pr-[5px] pl-2">
            <div className="flex h-7 items-center gap-[6px] pl-[3px]"><Icon name="cube" className="size-[15px]" />PRT0001.PRT</div>
            <div className="flex h-7 items-center gap-[5px] pl-2"><Triangle open={false} /><Icon name="bodies" />主体 (1)</div>
            {nodes.map((n) => (
              <div key={n.text} className="flex h-7 items-center gap-[5px] pl-[23px]"><Icon name={n.icon} className="size-4" />{n.text}</div>
            ))}
            <div className="mt-[7px] h-[3px] bg-[#6cb85c]" />
            <div className="mt-2 flex h-7 items-center pl-[23px]">
              <Icon name="sketch" />
              <svg viewBox="0 0 8 8" className="mb-[5px] ml-[5px] size-2"><path d="M4 0v8M0 4h8M1 1l6 6M7 1L1 7" stroke="#b5a100" /><circle cx="4" cy="4" r="2" fill="#fff23a" /></svg>
              <span className="ml-px">草绘 1</span>
            </div>
            <div className="mt-6 h-px bg-[#d3d7d9]" />
            <div className="mt-2 flex h-7 items-center gap-[5px] pl-2 font-bold"><Triangle open />次级树</div>
            <div className="flex h-[30px] items-center gap-[5px] pl-[3px]"><Icon name="sketchGroup" />草绘 1</div>
          </div>
        </div>
        <div className="w-[15px] bg-[#f3f5f8]" />
      </div>
    </aside>
  );
}

type Tool = { icon: string; tick?: boolean; name: string };

function ToolButton({ icon, tick, name }: Tool) {
  return (
    <button type="button" aria-label={name} className={tick ? "relative flex h-8 w-[35px] shrink-0 items-center pl-[7px]" : "flex h-8 w-[30px] shrink-0 items-center pl-[7px]"}>
      <Icon name={icon} />
      {tick && <svg viewBox="0 0 4 4" className="absolute right-[4px] bottom-1 size-[3px]"><path d="M4 0v4H0z" fill="#444" /></svg>}
    </button>
  );
}

const zoomTools: Tool[] = [
  { icon: "zoomFit", name: "重新调整" },
  { icon: "zoomIn", name: "放大" },
  { icon: "zoomOut", name: "缩小" },
  { icon: "repaint", name: "重画" },
];

const viewTools: Tool[] = [
  { icon: "boxLight", name: "显示样式", tick: true },
  { icon: "hexView", name: "已保存方向", tick: true },
  { icon: "camera", name: "视图管理器" },
  { icon: "datum", name: "基准显示过滤器", tick: true },
  { icon: "sketchView", name: "草绘视图方向" },
  { icon: "boxPlane", name: "修剪模型" },
  { icon: "perspective", name: "透视图" },
  { icon: "annotation", name: "草绘器显示过滤器", tick: true },
];

function FloatingBars() {
  const bar = "absolute top-[7px] flex h-[36px] items-center overflow-hidden border border-[#a3a7aa] bg-[#f7f9fb]";
  return (
    <>
      <div className={`${bar} left-[197px] w-[210px] pl-[2px]`}>
        {zoomTools.map((t) => <ToolButton key={t.name} {...t} />)}
        <ToolButton icon="shading" name="着色" tick />
        <ToolButton icon="boxLight" name="样式" tick />
        <ToolButton icon="hexView" name="方向" />
      </div>
      <div className={`${bar} left-[406px] w-[477px]`}>
        <ToolButton icon="zoomFit" name="调整" />
        <span className="mr-[9px] ml-auto h-[11px] w-[5px] bg-[#d5d8da]" />
      </div>
      <div className={`${bar} left-[421px] w-[447px] pl-[3px]`}>
        {zoomTools.map((t) => <ToolButton key={t.name} {...t} />)}
        {viewTools.map((t) => <ToolButton key={t.name} {...t} />)}
        <button type="button" aria-label="注释显示" aria-pressed="true" className="flex size-[27px] shrink-0 items-center justify-center border border-[#a9acae] bg-[#dcdee0]"><Icon name="noteEye" /></button>
        <button type="button" aria-label="旋转中心" aria-pressed="true" className="ml-[3px] flex size-[27px] shrink-0 items-center justify-center border border-[#a9acae] bg-[#dcdee0]"><Icon name="nodes" /></button>
      </div>
    </>
  );
}

function BrowserTab({ title, active }: { title: string; active?: boolean }) {
  return (
    <div className={active ? "flex h-[30px] flex-1 items-center border-l border-[#9a9ea1] bg-[#eeeff1] pl-[15px]" : "flex h-[30px] flex-1 items-center border-l border-[#9a9ea1] bg-[#cdd1d4] pl-[13px]"}>
      <Icon name="globe" />
      <button type="button" className="flex-1 pr-[22px] text-center">{title}</button>
      <button type="button" aria-label={`关闭 ${title}`} className="mr-1 mb-[3px] flex size-3 items-center justify-center border border-white bg-[#dfe1e2]">
        <svg viewBox="0 0 8 8" className="size-2" stroke="#333" strokeWidth="1.700"><path d="M1 1l6 6M7 1L1 7" /></svg>
      </button>
    </div>
  );
}

function Browser() {
  return (
    <section className="flex min-w-0 flex-1 flex-col border-r-4 border-l-[3px] border-r-[#a3a3a3] border-l-[#d9dddd] bg-[#f3f4f6] pr-[3px] pb-[3px]">
      <div className="flex flex-1 flex-col border-r border-b-2 border-[#adb2b5] pr-[3px] pb-[3px]">
        <div className="relative flex flex-1 flex-col border-r-2 border-b border-l-2 border-[#aeb4b7] bg-[#ebedef] text-[12px] leading-4 text-[#45494c]">
          <div className="flex h-[37px] items-center border-b border-[#b5b9bc]">
            <button type="button" aria-label="浏览器菜单" className="mt-4 ml-[4px]"><Caret /></button>
            <button type="button" aria-label="后退" className="ml-2 flex size-5 items-center justify-center border border-[#b9bdbf] bg-[#f5f6f7]"><Icon name="back" className="size-3" /></button>
            <button type="button" aria-label="前进" className="ml-1 flex size-5 items-center justify-center border border-[#b9bdbf] bg-[#f5f6f7]"><Icon name="forward" className="size-3" /></button>
            <button type="button" aria-label="历史记录" className="mr-2 ml-2"><Icon name="history" className="size-5" /></button>
            <input aria-label="地址" defaultValue="file:///C:/Program Files/PTC" className="h-7 w-[542px] border border-[#a9aeb1] bg-white px-[6px] text-[13px]" />
            <span className="h-7 w-5 border-y border-r border-[#8d9295] bg-[#e3e5e7]" />
            <span className="h-7 w-6 border-y border-r border-[#8d9295] bg-white" />
            <span className="h-7 w-6 border-y border-r border-[#8d9295] bg-white" />
          </div>
          <div className="flex h-[34px] items-start border-b border-[#a9adb0] pl-[7px] text-[13px]">
            <BrowserTab title="资源中心" active />
            <BrowserTab title="3DModelSpace" />
            <BrowserTab title="Punditas" />
            <button type="button" aria-label="新建标签页" className="flex h-[30px] w-[26px] items-center border-l border-[#9a9ea1] bg-[#bfc3c6] pb-[2px] pl-[6px]">
              <svg viewBox="0 0 8 8" className="size-2" stroke="#333" strokeWidth="1.500"><path d="M4 0v8M0 4h8" /></svg>
            </button>
          </div>
          <main className="flex-1 bg-white px-[7px] pt-[5px] font-['DejaVu_Sans','Noto_Sans_CJK_SC',sans-serif] text-[13px] text-black">
            <h2 className="text-[24px] leading-8 font-bold text-[#4a4a4c]">资源中心</h2>
            <p className="mt-[5px] leading-5">
              连接到 <a href="http://ptc.partcommunity.com" className="text-[14px] text-[#1f5a85] underline">http://ptc.partcommunity.com</a> 以获取各种资源，包括产品 <span className="text-[14px]">DVD</span> 光盘中未包括的工具和指南。
            </p>
          </main>
          <div className="flex h-[26px] items-start justify-end border-t border-[#bfc3c5] bg-[#ebedef] pt-1">
            <span className="h-[14px] w-[106px] border border-[#b3b7ba] bg-[#f7f9fb]" />
          </div>
          <FloatingBars />
        </div>
      </div>
    </section>
  );
}

function StatusBar() {
  const line = "h-[31px] w-px bg-[#a3a8ab]";
  return (
    <footer className="flex h-[43px] items-center border-t border-[#a9b0b3] bg-[#f7f9fb] pt-[9px] pb-[2px] text-[12px] text-[#4b5052]">
      <button type="button" aria-label="导航器" aria-pressed="true" className="ml-[6px] flex size-[26px] items-center justify-center border border-[#b0b3b5] bg-[#dfe1e3]"><Icon name="tree" className="ml-[2px] size-[15px]" /></button>
      <button type="button" aria-label="浏览器" className="ml-[9px]"><Icon name="globe" /></button>
      <button type="button" aria-label="全屏" className="ml-[14px]"><Icon name="panel" /></button>
      <span className="ml-[14px] h-[26px] w-px bg-[#a3a8ab]" />
      <Icon name="arrow" className="mr-px mb-1 ml-[5px] size-3" />
      <span className="mb-1 text-[11px] leading-4">选择一个参考 (例如曲面、平面或边) 以定义视图方向。</span>
      <div className="mr-[18px] ml-auto flex items-center">
        <span className={line} />
        <span className={`${line} ml-[32px]`} />
        <span className={`${line} ml-1`} />
        <div className="ml-[2px] flex h-7 w-[50px] border border-[#bfc3c5]">
          <button type="button" aria-label="查找" className="flex flex-1 items-center justify-center"><Icon name="binoculars" /></button>
          <button type="button" aria-label="查找选项" className="flex w-[19px] items-center justify-center border-l border-[#a9adaf] bg-[#d9dcde]"><Caret className="text-[#9a9ea0]" /></button>
        </div>
        <span className={`${line} ml-[2px]`} />
        <div className="relative ml-[97px] flex items-center">
          <select aria-label="选择过滤器" className="h-7 w-[181px] appearance-none border border-[#9ba0a3] bg-[#f7f9fb] pl-[9px] text-[#777b7d]">
            <option>所有草绘</option>
          </select>
          <span className="pointer-events-none absolute right-0 flex h-7 w-[20px] items-center justify-center border-l border-[#9ba0a3]"><Caret /></span>
        </div>
      </div>
    </footer>
  );
}

function OfficeIcon({ letter, dark, mid, light }: { letter: string; dark: string; mid: string; light: string }) {
  return (
    <svg viewBox="0 0 24 22" className="h-[22px] w-6">
      {letter === "P" ? (
        <g><circle cx="14" cy="11" r="10" fill={mid} /><path d="M14 1A10 10 0 0 1 24 11H14z" fill={light} /></g>
      ) : (
        <g><path d="M6 1h18v20H6z" fill={mid} /><path d="M6 1h18v6H6z" fill={light} /><path d="M6 14h18v7H6z" fill={dark} opacity="0.700" /></g>
      )}
      <rect x="0" y="5" width="12.500" height="12.500" rx="1" fill={dark} />
      <text x="6.200" y="15" fontSize="10.500" fontWeight="700" textAnchor="middle" fill="#fff" fontFamily="Open Sans, sans-serif">{letter}</text>
    </svg>
  );
}

function Taskbar() {
  const sys = "flex h-10 w-12 items-center justify-center";
  const app = "flex h-10 w-[49px] items-center justify-center";
  return (
    <div className="relative flex h-10 items-center overflow-hidden bg-linear-to-r from-[#223840] via-[#21343f] to-[#1b2842]">
      <button type="button" aria-label="开始" className={sys}>
        <svg viewBox="0 0 16 16" className="size-4" fill="#fff"><path d="M0 2.300l6.500-0.900v6.100H0zM7.400 1.300L16 0v7.500H7.400zM0 8.500h6.500v6.100L0 13.700zM7.400 8.500H16V16l-8.600-1.300z" /></svg>
      </button>
      <button type="button" aria-label="搜索" className={sys}><span className="size-4 rounded-full border-2 border-white" /></button>
      <button type="button" aria-label="任务视图" className={`${sys} mr-[2px]`}>
        <svg viewBox="0 0 16 16" className="size-4" fill="none" stroke="#fff" strokeWidth="1.200"><path d="M0.600 0v2.500h10V0M0.600 5h10v6h-10zM0.600 16v-2.500h10V16M14.500 0v3.500M14.500 9v7M13.500 5.500h2v2h-2z" /></svg>
      </button>
      <button type="button" aria-label="Edge" className={app}>
        <span className="flex h-10 w-10 items-center justify-center border-b-2 border-[#76b4e4]">
          <svg viewBox="0 0 24 24" className="size-6">
            <defs>
              <linearGradient id="edgeTop" x1="0" y1="0" x2="1" y2="0.300"><stop offset="0" stopColor="#2aa7dd" /><stop offset="0.600" stopColor="#3cc6bd" /><stop offset="1" stopColor="#62d65c" /></linearGradient>
              <linearGradient id="edgeLow" x1="0" y1="0" x2="1" y2="1"><stop offset="0" stopColor="#1f8fe0" /><stop offset="1" stopColor="#114a8b" /></linearGradient>
            </defs>
            <path d="M0.300 11C1 4.500 6 0 12.300 0 19 0 24 5 24 10.500c0 4-3 6-6 6-2.500 0-4-1-3-2.500C16.500 11.500 14.500 8 10.500 8c-4 0-8 1.500-10.200 3z" fill="url(#edgeTop)" />
            <path d="M0.300 11c1-3.500 5-5 8.500-5 4.500 0 7.200 3 6.700 6.500-1-1.500-3-2-4.500-0.500-3 3 1 8 6 7.500 2 0 4-0.500 5.300-1.500C20.500 21.500 17 24 12 24 5 24-0.500 18 0.300 11z" fill="url(#edgeLow)" />
          </svg>
        </span>
      </button>
      <button type="button" aria-label="文件资源管理器" className={app}>
        <span className="flex h-10 w-10 items-center justify-center border-b-2 border-[#76b4e4]">
          <svg viewBox="0 0 22 20" className="h-5 w-[22px]"><path d="M0 1h9l2 2h11v16H0z" fill="#e0a21f" /><path d="M0 4h22v15H0z" fill="#ffd76c" /><path d="M4 19v-6q0-2 2-2h10q2 0 2 2v6h-4v-4H8v4z" fill="#3f8fd2" /></svg>
        </span>
      </button>
      <button type="button" aria-label="应用商店" className={app}>
        <svg viewBox="0 0 24 24" className="size-6"><path d="M6.500 7V1h11v6" fill="none" stroke="#f3f3f3" strokeWidth="1.800" /><path d="M0.500 6h23v18h-23z" fill="#f5f5f5" /><path d="M7.500 10.500h4v4h-4z" fill="#e2512d" /><path d="M12.500 10.500h4v4h-4z" fill="#7bb42c" /><path d="M7.500 15.500h4v4h-4z" fill="#2f9fe0" /><path d="M12.500 15.500h4v4h-4z" fill="#f5b81d" /></svg>
      </button>
      <button type="button" aria-label="邮件" className={app}>
        <svg viewBox="0 0 24 22" className="h-[22px] w-6"><path d="M0 7L12 0l12 7v4H0z" fill="#1568ae" /><path d="M0 7l12 8 12-8v15H0z" fill="#28a5ea" /><path d="M2 7h20l-10 8z" fill="#f3f7fa" /><path d="M0 22L24 7v15z" fill="#43c0f5" /></svg>
      </button>
      <button type="button" aria-label="Word" className={app}><OfficeIcon letter="W" dark="#174a9c" mid="#2b73d2" light="#42a2ec" /></button>
      <button type="button" aria-label="Outlook" className={app}><OfficeIcon letter="O" dark="#0f65b5" mid="#2898e2" light="#45c2f3" /></button>
      <button type="button" aria-label="PowerPoint" className={app}><OfficeIcon letter="P" dark="#bd3a1c" mid="#d9532f" light="#fa9c82" /></button>
      <button type="button" aria-label="Excel" className={app}><OfficeIcon letter="X" dark="#10703c" mid="#229a5a" light="#39c885" /></button>
      <button type="button" aria-label="飞鸟" className={app}><span className="flex size-6 items-center justify-center rounded bg-[#3f80f6]"><Icon name="bird" className="size-5" /></span></button>
      <button type="button" aria-label="Creo" className="flex h-10 w-12 items-center justify-center border-b-2 border-[#76b4e4] bg-[#4f616a]">
        <svg viewBox="0 0 21 21" className="size-[21px]"><path d="M0.500 3.500l3-3h17l-3 3z" fill="#f2fdff" /><path d="M17.500 3.500l3-3v17l-3 3z" fill="#7cc9dc" /><path d="M0.500 3.500h17v17H0.500z" fill="#ace9fa" /></svg>
      </button>
      <div className="mb-4 ml-auto flex items-center text-white">
        <svg viewBox="0 0 116 16" aria-hidden="true" className="mt-4 h-4 w-[116px]" fill="none" stroke="#fff" strokeWidth="1.500">
          <path d="M1 10l6-6 6 6" />
          <path d="M22 11c0-10 13-12 16 0z" fill="#dfe3e8" stroke="none" /><path d="M31 3c4 0 6 3 7 8h-7z" fill="#cf4654" stroke="none" />
          <path d="M51 4.500h9v7H49M46 1v4h4V1" />
          <path d="M74 11c2-5 6-8 10-8M79 11c1-2 3-4 5-4" />
          <path d="M96 6h3l4-4v12M105 4l6 6M111 4l-6 6" />
        </svg>
        <span className="mt-5 ml-[3px] text-[13px] leading-4">英</span>
        <time className="ml-[25px] text-[12px] leading-4">17:36</time>
        <svg viewBox="0 0 16 16" aria-hidden="true" className="mt-5 mr-[25px] ml-[34px] size-4"><path d="M0 1h16v12h-5l-3 3v-3H0z" fill="#fff" /><path d="M3 4.500h10M3 7.500h10" stroke="#3a465a" /></svg>
      </div>
      <aside className="absolute top-[21px] right-[12px] flex h-8 w-[589px] border-t-2 border-l-8 border-[#6fb1d6] bg-[#f5f6f6] pt-[7px] pl-[5px]">
        <span className="flex h-[15px] w-[31px] items-center justify-center rounded-md border-2 border-[#159296] bg-[#159296] font-[Inter,sans-serif] text-[11px] leading-3 font-bold text-white">eset</span>
        <span className="ml-[6px] font-[Roboto,sans-serif] text-[12px] leading-4 text-[#7b7f81]">INTERNET SECURITY</span>
      </aside>
    </div>
  );
}

function Watermark() {
  return (
    <div className="pointer-events-none absolute right-[9px] bottom-1 h-[60px] w-[202px] opacity-80">
      <div className="absolute inset-x-0 bottom-0 h-9 bg-white/30" />
      <svg viewBox="0 0 60 56" aria-hidden="true" className="absolute top-0 left-[2px] h-14 w-[60px]" fill="none">
        <ellipse cx="15" cy="13" rx="17" ry="11" transform="rotate(38 15 13)" stroke="#8797ac" strokeWidth="3" />
        <ellipse cx="25" cy="30" rx="19" ry="12" transform="rotate(-45 25 30)" stroke="#8797ac" strokeWidth="3" />
        <path d="M38 18c10-1 18 4 16 12-2 12-13 23-26 22" stroke="#c25668" strokeWidth="4" />
      </svg>
      <span className="absolute top-[2px] right-[14px] text-[30px] leading-8 font-black whitespace-nowrap text-[#74c29d]">野火论坛</span>
      <span className="absolute right-0 bottom-[6px] font-['DejaVu_Sans',sans-serif] text-[14px] leading-4 text-[#a9c3c9]">www.proewildfire.cn</span>
    </div>
  );
}

export default function App() {
  return (
    <div className="relative flex min-h-screen flex-col overflow-hidden bg-[#eeeeee] font-['Open_Sans','Noto_Sans_CJK_SC',sans-serif]">
      <TitleBar />
      <TabBar />
      <Ribbon />
      <div className="relative flex flex-1">
        <Aside />
        <Browser />
        <div className="w-[410px] shrink-0 bg-[#eeeeee]" />
        <div role="tooltip" className="absolute right-[280px] bottom-[158px] h-[49px] w-[274px] border border-[#b9c9d6] bg-white py-[6px] pl-2 text-[12px] leading-[18px] text-[#2f3335] shadow-[3px_3px_2px_rgba(60,70,75,0.7)]">
          选择一个参考 (例如曲面、平面或边) 以定义视图方向。
        </div>
      </div>
      <StatusBar />
      <Taskbar />
      <Watermark />
    </div>
  );
}
